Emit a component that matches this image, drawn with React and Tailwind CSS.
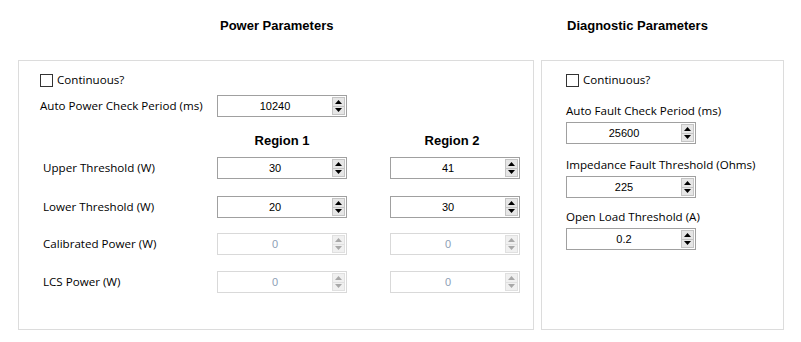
import React from 'react'

const label = "font-['Open_Sans',sans-serif] text-[11.6px] text-black leading-none"
const num = "font-['Liberation_Sans',Arial,sans-serif] text-[11px] leading-none"

function Arrow({ up, disabled }) {
  return (
    <svg width="7" height="4" viewBox="0 0 7 4">
      <polygon points={up ? '3.5,0 7,4 0,4' : '0,0 7,0 3.5,4'} fill={disabled ? '#a8a8a8' : '#000'} />
    </svg>
  )
}

function Spin({ value, disabled, w = 130 }) {
  return (
    <div
      className={`flex items-center h-[22px] bg-white border ${disabled ? 'border-[#d9d9d9]' : 'border-[#a0a0a0]'}`}
      style={{ width: w }}
    >
      <span className={`flex-1 text-center ${num} ${disabled ? 'text-[#8da0b6]' : 'text-black'}`}>{value}</span>
      <div className={`flex flex-col w-[13px] h-[18px] mr-[1px] border ${disabled ? 'border-[#e0e0e0] bg-[#f0f0f0]' : 'border-[#c4c4c4] bg-[#e6e6e6]'}`}>
        <div className="flex-1 flex items-center justify-center"><Arrow up disabled={disabled} /></div>
        <div className={`h-px ${disabled ? 'bg-[#e0e0e0]' : 'bg-[#c4c4c4]'}`} />
        <div className="flex-1 flex items-center justify-center"><Arrow disabled={disabled} /></div>
      </div>
    </div>
  )
}

function Check({ text }) {
  return (
    <div className="flex items-center gap-[4px] h-[16px]">
      <div className="w-[13px] h-[13px] border border-[#333] bg-white" />
      <span className={label}>{text}</span>
    </div>
  )
}

function Row({ name, a, b, disabled, mt }) {
  return (
    <div className="flex items-center h-[22px]" style={{ marginTop: mt }}>
      <span className={`${label} w-[177px] shrink-0 pl-[3px]`}>{name}</span>
      <Spin value={a} disabled={disabled} />
      <div className="w-[43px] shrink-0" />
      <Spin value={b} disabled={disabled} />
    </div>
  )
}

export default function App() {
  const title = "font-['Liberation_Sans',Arial,sans-serif] font-bold text-[13px] text-black leading-none"
  return (
    <div className="w-[801px] h-[342px] bg-white overflow-hidden">
      <div className="flex h-[60px] pt-[19px]">
        <div className={`${title} pl-[220px] w-[567px]`}>Power Parameters</div>
        <div className={title}>Diagnostic Parameters</div>
      </div>

      <div className="flex pl-[18px] gap-[7px]">
        {/* Power */}
        <div className="w-[516px] h-[270px] border border-[#dcdcdc] pl-[21px] pt-[11px]">
          <Check text="Continuous?" />
          <div className="flex items-center h-[22px] mt-[7px]">
            <span className={`${label} w-[177px] shrink-0`}>Auto Power Check Period (ms)</span>
            <Spin value="10240" />
          </div>
          <div className={`flex h-[16px] mt-[17px] ${title}`}>
            <div className="w-[177px] shrink-0" />
            <div className="w-[130px] text-center">Region 1</div>
            <div className="w-[40px]" />
            <div className="w-[130px] text-center">Region 2</div>
          </div>
          <Row name="Upper Threshold (W)" a="30" b="41" mt={7} />
          <Row name="Lower Threshold (W)" a="20" b="30" mt={17} />
          <Row name="Calibrated Power (W)" a="0" b="0" disabled mt={15} />
          <Row name="LCS Power (W)" a="0" b="0" disabled mt={16} />
        </div>

        {/* Diagnostic */}
        <div className="w-[243px] h-[270px] border border-[#dcdcdc] pl-[24px] pt-[11px]">
          <Check text="Continuous?" />
          <div className={`${label} mt-[17px] h-[14px]`}>Auto Fault Check Period (ms)</div>
          <div className="mt-[3px]"><Spin value="25600" /></div>
          <div className={`${label} mt-[15px] h-[14px]`}>Impedance Fault Threshold (Ohms)</div>
          <div className="mt-[3px]"><Spin value="225" /></div>
          <div className={`${label} mt-[13px] h-[14px]`}>Open Load Threshold (A)</div>
          <div className="mt-[3px]"><Spin value="0.2" /></div>
        </div>
      </div>
    </div>
  )
}
